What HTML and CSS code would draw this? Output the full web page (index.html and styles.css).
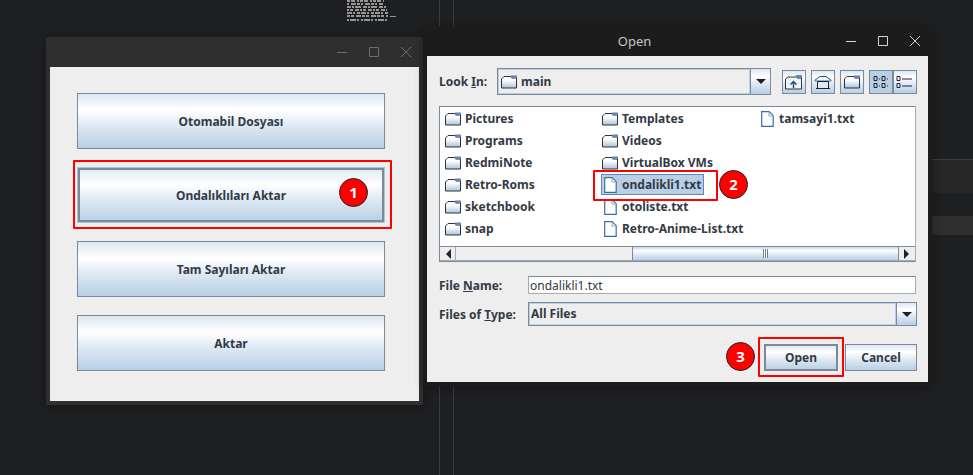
FILE: index.html
```html
<!DOCTYPE html>
<html>
<head>
    <meta charset="utf-8" />
    <title>Open</title>
    <link rel="stylesheet" href="styles.css">
</head>
<body>
    <svg class="defs" width="0" height="0">
        <defs>
            <linearGradient id="folderfill" x1="0" y1="0" x2="0" y2="1">
                <stop offset="0" stop-color="#ffffff"/>
                <stop offset="0.3" stop-color="#ffffff"/>
                <stop offset="1" stop-color="#a9c3de"/>
            </linearGradient>
        </defs>
        <symbol id="folder" viewBox="0 0 16 14">
            <path d="M.5 4L3 1.500h7.500v1.500h5v10H.5z" fill="url(#folderfill)" stroke="#333"/>
            <path d="M10 .5h6v2.500h-6z" fill="#6382bf"/>
        </symbol>
        <symbol id="file" viewBox="0 0 13 16">
            <path d="M.7.7h7.500l4 4v10.600H.7z" fill="#fff" stroke="#3a6ea5" stroke-width="1.200"/>
            <path d="M8 .7v4.300h4.300" fill="none" stroke="#8aa8c8"/>
        </symbol>
    </svg>

    <div class="desktop">
        <div class="vline vline-a"></div>
        <div class="vline vline-b"></div>
        <div class="side-line"></div>
        <div class="side-a"></div>
        <div class="side-b"></div>
        <svg class="noise" width="50" height="22">
            <g fill="none" stroke="#969696" stroke-width="2">
                <path d="M0 1h37" stroke-dasharray="3 1 4 2 2 1"/>
                <path d="M0 4h36" stroke-dasharray="2 2 5 1 3 1"/>
                <path d="M0 7h40" stroke-dasharray="4 1 2 1 6 2"/>
                <path d="M0 10h40" stroke-dasharray="2 1 3 2 4 1"/>
                <path d="M0 13h41" stroke-dasharray="5 1 2 2 3 1"/>
                <path d="M0 16h41" stroke-dasharray="3 1 3 2 5 1"/>
                <path d="M0 20h41" stroke-dasharray="2 1 6 1 2 2"/>
                <path d="M43 16.500h6" stroke-width="1"/>
            </g>
        </svg>

        <!-- main window -->
        <div class="window win-main">
            <div class="titlebar">
                <div class="win-btns dim">
                    <svg width="12" height="12"><path d="M1 6.500h10"/></svg>
                    <svg width="12" height="12"><path d="M1.500 1.500h9v9h-9z"/></svg>
                    <svg width="12" height="12"><path d="M1 1l10 10M11 1L1 11"/></svg>
                </div>
            </div>
            <div class="main-body">
                <div class="btn big">Otomabil Dosyası</div>
                <div class="btn big focus">Ondalıklıları Aktar</div>
                <div class="btn big">Tam Sayıları Aktar</div>
                <div class="btn big">Aktar</div>
            </div>
        </div>

        <!-- open dialog -->
        <div class="window win-open">
            <div class="titlebar">
                <span class="title">Open</span>
                <div class="win-btns">
                    <svg width="12" height="12"><path d="M1 6.500h10"/></svg>
                    <svg width="12" height="12"><path d="M1.500 1.500h9v9h-9z"/></svg>
                    <svg width="12" height="12"><path d="M1 1l10 10M11 1L1 11"/></svg>
                </div>
            </div>
            <div class="open-body">
                <div class="row-top">
                    <span class="lbl lookin">Look <u>I</u>n:</span>
                    <div class="combo main-combo">
                        <div class="combo-val">
                            <svg class="ico-folder"><use href="#folder"/></svg>
                            <span>main</span>
                        </div>
                        <div class="combo-arrow"><i class="tri-down"></i></div>
                    </div>
                    <div class="tools">
                        <div class="tool">
                            <svg width="18" height="16" viewBox="0 0 18 16" fill="none" stroke="#1f4f82">
                                <path d="M.5 5L3 3h8l1 1h4.500v11H.5z" fill="#eef3f9" stroke="#333"/>
                                <path d="M11 1h6v3h-6z" fill="#6382bf" stroke="none"/>
                                <path d="M8.500 14V8M5.500 10.500l3-3 3 3" stroke-width="1.500"/>
                            </svg>
                        </div>
                        <div class="tool">
                            <svg width="18" height="16" viewBox="0 0 18 16" fill="none" stroke="#1f4f82">
                                <path d="M.5 6.500L6 2.500h6l5.500 4"/>
                                <path d="M1 7h16" stroke="#3a6ea5"/>
                                <path d="M3.500 7.500h11v7h-11z" stroke="#222" fill="#dfe8f3"/>
                                <path d="M2 14.500h14" stroke="#222"/>
                            </svg>
                        </div>
                        <div class="tool">
                            <svg width="16" height="14"><use href="#folder"/></svg>
                        </div>
                        <div class="tool-pair">
                            <div class="tool on">
                                <svg width="16" height="16" viewBox="0 0 16 16" fill="none" stroke="#223">
                                    <path d="M1 2.500h3v4H1zM9 2.500h3v4H9zM1 9.500h3v4H1zM9 9.500h3v4H9z"/>
                                    <path d="M6 5h1M14 5h1M6 12h1M14 12h1"/>
                                </svg>
                            </div>
                            <div class="tool">
                                <svg width="18" height="16" viewBox="0 0 18 16" fill="none" stroke="#223">
                                    <path d="M1 2.500h3v4H1zM1 9.500h3v4H1z"/>
                                    <path d="M6 5h10M6 12h10"/>
                                </svg>
                            </div>
                        </div>
                    </div>
                </div>

                <div class="listbox">
                    <div class="files">
                        <div class="item"><svg class="ico-folder"><use href="#folder"/></svg><span>Pictures</span></div>
                        <div class="item"><svg class="ico-folder"><use href="#folder"/></svg><span>Programs</span></div>
                        <div class="item"><svg class="ico-folder"><use href="#folder"/></svg><span>RedmiNote</span></div>
                        <div class="item"><svg class="ico-folder"><use href="#folder"/></svg><span>Retro-Roms</span></div>
                        <div class="item"><svg class="ico-folder"><use href="#folder"/></svg><span>sketchbook</span></div>
                        <div class="item"><svg class="ico-folder"><use href="#folder"/></svg><span>snap</span></div>
                        <div class="item"><svg class="ico-folder"><use href="#folder"/></svg><span>Templates</span></div>
                        <div class="item"><svg class="ico-folder"><use href="#folder"/></svg><span>Videos</span></div>
                        <div class="item"><svg class="ico-folder"><use href="#folder"/></svg><span>VirtualBox VMs</span></div>
                        <div class="item selected"><svg class="ico-file"><use href="#file"/></svg><span>ondalikli1.txt</span></div>
                        <div class="item"><svg class="ico-file"><use href="#file"/></svg><span>otoliste.txt</span></div>
                        <div class="item"><svg class="ico-file"><use href="#file"/></svg><span>Retro-Anime-List.txt</span></div>
                        <div class="item"><svg class="ico-file"><use href="#file"/></svg><span>tamsayi1.txt</span></div>
                    </div>
                    <div class="scrollbar">
                        <div class="sb-btn"><i class="tri-left"></i></div>
                        <div class="sb-track"></div>
                        <div class="sb-thumb"><i class="grip"></i></div>
                        <div class="sb-btn"><i class="tri-right"></i></div>
                    </div>
                </div>

                <div class="row-name">
                    <span class="lbl field-lbl">File <u>N</u>ame:</span>
                    <div class="textfield">ondalikli1.txt</div>
                </div>
                <div class="row-type">
                    <span class="lbl field-lbl">Files of <u>T</u>ype:</span>
                    <div class="combo type-combo">
                        <div class="combo-val">All Files</div>
                        <div class="combo-arrow"><i class="tri-down"></i></div>
                    </div>
                </div>
                <div class="row-btns">
                    <div class="btn small open focus">Open</div>
                    <div class="btn small cancel">Cancel</div>
                </div>
            </div>
        </div>

        <!-- annotations -->
        <div class="mark mark-1"></div>
        <div class="mark mark-2"></div>
        <div class="mark mark-3"></div>
        <div class="badge badge-1">1</div>
        <div class="badge badge-2">2</div>
        <div class="badge badge-3">3</div>
    </div>
</body>
</html>
```

FILE: styles.css
```css
html, body {
    margin: 0;
    padding: 0;
}
body {
    background-color: #1e1f21;
    font-family: "Noto Sans", sans-serif;
    color: #333a45;
    overflow: hidden;
}
.defs {
    position: absolute;
}
.desktop {
    position: relative;
    width: 973px;
    height: 475px;
    overflow: hidden;
}

/* background bits */
.vline {
    position: absolute;
    top: 0;
    bottom: 0;
    width: 1px;
    background-color: #3a3b3d;
}
.vline-a { left: 439px; }
.vline-b { left: 453px; }
.side-line {
    position: absolute;
    left: 932px;
    top: 159px;
    width: 41px;
    height: 1px;
    background-color: #3c3c3c;
}
.side-a {
    position: absolute;
    left: 932px;
    top: 160px;
    width: 41px;
    height: 33px;
    background-color: #262626;
}
.side-b {
    position: absolute;
    left: 932px;
    top: 216px;
    width: 41px;
    height: 19px;
    background-color: #2f2f2f;
}
.noise {
    position: absolute;
    left: 347px;
    top: 0;
}

/* windows */
.window {
    position: absolute;
    display: flex;
    flex-direction: column;
    box-sizing: border-box;
    box-shadow: 0 2px 8px rgba(0, 0, 0, 0.35);
}
.win-main {
    left: 46px;
    top: 37px;
    width: 377px;
    height: 368px;
    padding: 0 4px 4px;
    background-color: #2f2f2f;
    border-radius: 3px 3px 0 0;
}
.win-open {
    left: 423px;
    top: 26px;
    width: 509px;
    height: 360px;
    padding: 0 4px 4px;
    background-color: #1c1c1d;
    border-radius: 3px 3px 0 0;
}
.titlebar {
    position: relative;
    display: flex;
    align-items: center;
    justify-content: flex-end;
    height: 30px;
    flex-shrink: 0;
}
.title {
    position: absolute;
    left: 0;
    right: 86px;
    text-align: center;
    font-size: 13px;
    color: #c4c8cc;
}
.win-btns {
    display: flex;
    gap: 20px;
    padding-right: 7px;
}
.win-btns svg {
    display: block;
    fill: none;
    stroke: #d4d4d4;
    stroke-width: 1;
}
.win-btns.dim svg {
    stroke: #6e6e6e;
}

/* main window body */
.main-body {
    flex-grow: 1;
    display: flex;
    flex-direction: column;
    gap: 18px;
    padding: 26px 34px 0 27px;
    background-color: #eeeeee;
}

/* metal buttons */
.btn {
    display: flex;
    align-items: center;
    justify-content: center;
    box-sizing: border-box;
    border: 1px solid #7a8a99;
    background: linear-gradient(#dde8f3, #ffffff 30%, #dde8f3 60%, #b8cfe5);
    font-weight: bold;
    font-size: 12px;
    color: #333a45;
}
.btn.big {
    height: 56px;
}
.btn.focus {
    border-color: #aec4d9;
    box-shadow: inset 0 0 0 2px #7a8a99;
}

/* open dialog */
.open-body {
    flex-grow: 1;
    display: flex;
    flex-direction: column;
    padding: 12px 11px 0 12px;
    background-color: #eeeeee;
}
.lbl {
    font-weight: bold;
    font-size: 12px;
    color: #333a45;
}
.row-top {
    display: flex;
    align-items: center;
    height: 27px;
}
.lookin {
    width: 58px;
}
.combo {
    display: flex;
    box-sizing: border-box;
    border: 1px solid #7a8a99;
    background-color: #eeeeee;
}
.main-combo {
    width: 274px;
    height: 27px;
}
.combo-val {
    flex-grow: 1;
    display: flex;
    align-items: center;
    gap: 4px;
    padding-left: 2px;
    font-weight: bold;
    font-size: 12px;
    border: 1px solid #b8cfe5;
}
.combo-arrow {
    width: 19px;
    flex-shrink: 0;
    display: flex;
    align-items: center;
    justify-content: center;
    border-left: 1px solid #7a8a99;
    background: linear-gradient(#dde8f3, #ffffff 30%, #dde8f3 60%, #b8cfe5);
}
.tri-down {
    width: 0;
    height: 0;
    border-left: 5px solid transparent;
    border-right: 5px solid transparent;
    border-top: 5px solid #222;
}
.tri-left {
    width: 0;
    height: 0;
    border-top: 5px solid transparent;
    border-bottom: 5px solid transparent;
    border-right: 5px solid #222;
}
.tri-right {
    width: 0;
    height: 0;
    border-top: 5px solid transparent;
    border-bottom: 5px solid transparent;
    border-left: 5px solid #222;
}
.ico-folder {
    width: 16px;
    height: 14px;
    flex-shrink: 0;
}
.ico-file {
    width: 13px;
    height: 16px;
    margin-left: 2px;
    margin-right: 1px;
    flex-shrink: 0;
}
.tools {
    display: flex;
    gap: 5px;
    margin-left: 11px;
}
.tool-pair {
    display: flex;
}
.tool {
    display: flex;
    align-items: center;
    justify-content: center;
    box-sizing: border-box;
    width: 24px;
    height: 24px;
    border: 1px solid #7a8a99;
    background: linear-gradient(#dde8f3, #ffffff 30%, #dde8f3 60%, #b8cfe5);
}
.tool.on {
    background: #b8cfe5;
}
.listbox {
    display: flex;
    flex-direction: column;
    box-sizing: border-box;
    height: 156px;
    margin-top: 11px;
    margin-right: 1px;
    border: 1px solid #7a8a99;
    border-right-color: #a0adba;
    background-color: #fff;
}
.files {
    flex-grow: 1;
    display: grid;
    grid-auto-flow: column;
    grid-template-rows: repeat(6, 22px);
    grid-auto-columns: 157px;
    padding: 1px 0 0 4px;
}
.item {
    display: flex;
    align-items: center;
    gap: 4px;
    justify-self: start;
    align-self: start;
    box-sizing: border-box;
    height: 21px;
    padding: 0 2px 0 0;
    border: 1px solid transparent;
    font-weight: bold;
    font-size: 12px;
    white-space: nowrap;
}
.item.selected {
    background-color: #b8cfe5;
    border-color: #6382bf;
}
.scrollbar {
    display: flex;
    height: 15px;
    flex-shrink: 0;
    box-sizing: border-box;
    border-top: 1px solid #7a8a99;
    border-bottom: 1px solid #a0adba;
    padding: 0 1px;
    background-color: #eeeeee;
}
.sb-btn {
    width: 15px;
    flex-shrink: 0;
    display: flex;
    align-items: center;
    justify-content: center;
    box-sizing: border-box;
    border-right: 1px solid #a0adba;
}
.sb-track {
    width: 176px;
    flex-shrink: 0;
}
.sb-thumb {
    flex-grow: 1;
    display: flex;
    align-items: center;
    justify-content: center;
    border-left: 1px solid #7a8a99;
    border-right: 1px solid #7a8a99;
    background: linear-gradient(#c8d9ea, #ffffff 30%, #dde8f3 60%, #b8cfe5);
}
.sb-btn:last-child {
    border-right: 0;
}
.grip {
    width: 5px;
    height: 9px;
    background: repeating-linear-gradient(90deg, #6f8296 0 1px, #ffffff 1px 2px);
}
.row-name {
    display: flex;
    align-items: center;
    height: 18px;
    margin-top: 14px;
}
.field-lbl {
    width: 89px;
    flex-shrink: 0;
}
.textfield {
    flex-grow: 1;
    display: flex;
    align-items: center;
    box-sizing: border-box;
    height: 18px;
    margin-right: 1px;
    padding-left: 1px;
    border: 1px solid #a0adba;
    border-top-color: #7a8a99;
    background-color: #fff;
    font-size: 12px;
    color: #333a45;
}
.row-type {
    display: flex;
    align-items: center;
    height: 24px;
    margin-top: 8px;
}
.type-combo {
    flex-grow: 1;
    height: 24px;
}
.type-combo .combo-val {
    padding: 0 0 2px 1px;
}
.row-btns {
    display: flex;
    justify-content: flex-end;
    gap: 7px;
    margin-top: 18px;
}
.btn.small {
    height: 27px;
}
.btn.open {
    width: 74px;
    border: 1px solid #dde8f3;
    outline: 2px solid #7a8a99;
    outline-offset: -2px;
    box-shadow: none;
}
.btn.cancel {
    width: 72px;
}

/* annotations */
.mark {
    position: absolute;
    box-sizing: border-box;
    border: 2px solid #ff0000;
    border-radius: 1px;
}
.mark-1 { left: 73px; top: 160px; width: 319px; height: 69px; }
.mark-2 { left: 593px; top: 170px; width: 125px; height: 31px; }
.mark-3 { left: 758px; top: 337px; width: 86px; height: 40px; }
.badge {
    position: absolute;
    box-sizing: border-box;
    width: 29px;
    height: 29px;
    border: 1px solid #222;
    border-radius: 50%;
    background-color: #ff0000;
    color: #fff;
    font-weight: bold;
    font-size: 15px;
    line-height: 27px;
    text-align: center;
}
.badge-1 { left: 339px; top: 178px; }
.badge-2 { left: 719px; top: 170px; }
.badge-3 { left: 726px; top: 342px; }
```
